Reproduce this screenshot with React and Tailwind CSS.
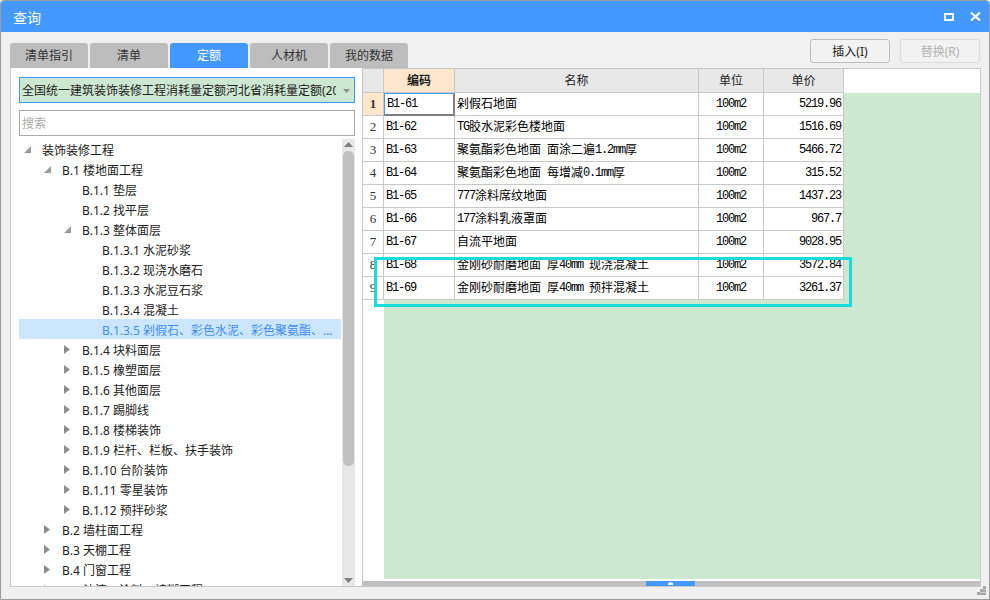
import React from "react";

const CJK = '"Noto Sans", "Noto Sans CJK SC", sans-serif';

const TABS = [
  { label: "清单指引" },
  { label: "清单" },
  { label: "定额", active: true },
  { label: "人材机" },
  { label: "我的数据" },
];

const TREE = [
  { level: 0, label: "装饰装修工程", arrow: "open" },
  { level: 1, label: "B.1 楼地面工程", arrow: "open" },
  { level: 2, label: "B.1.1 垫层" },
  { level: 2, label: "B.1.2 找平层" },
  { level: 2, label: "B.1.3 整体面层", arrow: "open" },
  { level: 3, label: "B.1.3.1 水泥砂浆" },
  { level: 3, label: "B.1.3.2 现浇水磨石" },
  { level: 3, label: "B.1.3.3 水泥豆石浆" },
  { level: 3, label: "B.1.3.4 混凝土" },
  { level: 3, label: "B.1.3.5 剁假石、彩色水泥、彩色聚氨酯、自流平地面", selected: true },
  { level: 2, label: "B.1.4 块料面层", arrow: "closed" },
  { level: 2, label: "B.1.5 橡塑面层", arrow: "closed" },
  { level: 2, label: "B.1.6 其他面层", arrow: "closed" },
  { level: 2, label: "B.1.7 踢脚线", arrow: "closed" },
  { level: 2, label: "B.1.8 楼梯装饰", arrow: "closed" },
  { level: 2, label: "B.1.9 栏杆、栏板、扶手装饰", arrow: "closed" },
  { level: 2, label: "B.1.10 台阶装饰", arrow: "closed" },
  { level: 2, label: "B.1.11 零星装饰", arrow: "closed" },
  { level: 2, label: "B.1.12 预拌砂浆", arrow: "closed" },
  { level: 1, label: "B.2 墙柱面工程", arrow: "closed" },
  { level: 1, label: "B.3 天棚工程", arrow: "closed" },
  { level: 1, label: "B.4 门窗工程", arrow: "closed" },
  { level: 1, label: "B.5 油漆、涂料、裱糊工程", arrow: "closed" },
];

const ROWS = [
  ["B1-61", "剁假石地面", "100m2", "5219.96"],
  ["B1-62", "TG胶水泥彩色楼地面", "100m2", "1516.69"],
  ["B1-63", "聚氨酯彩色地面 面涂二遍1.2mm厚", "100m2", "5466.72"],
  ["B1-64", "聚氨酯彩色地面 每增减0.1mm厚", "100m2", "315.52"],
  ["B1-65", "777涂料席纹地面", "100m2", "1437.23"],
  ["B1-66", "177涂料乳液罩面", "100m2", "967.7"],
  ["B1-67", "自流平地面", "100m2", "9028.95"],
  ["B1-68", "金刚砂耐磨地面 厚40mm 现浇混凝土", "100m2", "3572.84"],
  ["B1-69", "金刚砂耐磨地面 厚40mm 预拌混凝土", "100m2", "3261.37"],
];

// latin runs in the grid are half-width, like the old bitmap font
function Mixed({ text }) {
  return text.split(/([\x20-\x7e]+)/).map((part, i) =>
    /^[\x20-\x7e]+$/.test(part) ? (
      <span key={i} className="font-['Liberation_Mono'] tracking-[-1.2px] whitespace-pre">
        {part}
      </span>
    ) : (
      <span key={i}>{part}</span>
    )
  );
}

function TreeArrow({ type }) {
  if (type === "open") {
    return (
      <svg width="7" height="7" viewBox="0 0 7 7" className="block">
        <path d="M7 0V7H0Z" fill="#9a9a9a" />
      </svg>
    );
  }
  return (
    <svg width="6" height="9" viewBox="0 0 6 9" className="block">
      <path d="M0 0L6 4.500L0 9Z" fill="#8c8c8c" />
    </svg>
  );
}

function TreeRow({ item }) {
  const indent = ["pl-[5px]", "pl-[25px]", "pl-[45px]", "pl-[65px]"][item.level];
  return (
    <div
      className={`h-5 shrink-0 flex items-center text-xs ${indent} ${
        item.selected ? "bg-[#cce6ff] text-[#3f8ff0]" : "text-[#222]"
      }`}
    >
      <span className="w-[18px] shrink-0 flex items-center">{item.arrow && <TreeArrow type={item.arrow} />}</span>
      <span className="truncate pr-[4px] pt-[3px]">{item.label}</span>
    </div>
  );
}

function GridRow({ row, index }) {
  const first = index === 0;
  return (
    <div className="h-[23px] shrink-0 flex text-xs text-black">
      <div
        className={`w-[21px] shrink-0 flex items-center justify-center border-r border-b border-[#c8c8c8] text-[#333] font-['Liberation_Serif'] text-[13px] ${
          first ? "bg-[#fde6cc] font-bold" : "bg-white"
        }`}
      >
        {index + 1}
      </div>
      <div
        className={`w-[71px] shrink-0 flex items-center pl-[2px] bg-white ${
          first
            ? "border-l border-t border-[#4399ff] border-r-2 border-b-2 border-r-[#808080] border-b-[#808080]"
            : "border-r border-b border-[#c8c8c8]"
        }`}
      >
        <Mixed text={row[0]} />
      </div>
      <div className="w-[244px] shrink-0 flex items-center pl-[2px] bg-white border-r border-b border-[#c8c8c8] whitespace-nowrap">
        <Mixed text={row[1]} />
      </div>
      <div className="w-[65px] shrink-0 flex items-center justify-center bg-white border-r border-b border-[#c8c8c8]">
        <Mixed text={row[2]} />
      </div>
      <div className="w-[80px] shrink-0 flex items-center justify-end pr-[2px] bg-white border-r border-b border-[#c8c8c8]">
        <Mixed text={row[3]} />
      </div>
      <div className="flex-1 bg-[#cde8d0]" />
    </div>
  );
}

export default function App() {
  return (
    <div
      className="w-[990px] h-[600px] relative flex flex-col overflow-hidden bg-[#f0f0f0] border border-[#9b9b9b] rounded-t-[4px]"
      style={{ fontFamily: CJK }}
    >
      {/* Title bar */}
      <header className="h-[31px] shrink-0 bg-[#4399ff] flex items-center pl-3 pr-[8px] text-white">
        <span className="text-sm pt-[2px]">查询</span>
        <div className="ml-auto flex items-center gap-[16px]">
          <span className="block w-[10px] h-[8px] border-2 border-white" />
          <svg width="11" height="9" viewBox="0 0 11 9">
            <path d="M1 0.500L10 8.500M10 0.500L1 8.500" stroke="#fff" strokeWidth="2.200" />
          </svg>
        </div>
      </header>

      {/* Tabs and actions */}
      <div className="h-[36px] shrink-0 flex items-end pl-[9px] pr-[9px]">
        <div className="flex gap-[2px]">
          {TABS.map((tab) => (
            <div
              key={tab.label}
              className={`w-[78px] h-[25px] pt-px flex items-center justify-center text-xs rounded-t-[3px] ${
                tab.active ? "bg-[#4399ff] text-white" : "bg-[#bdbdbd] text-[#333]"
              }`}
            >
              {tab.label}
            </div>
          ))}
        </div>
        <div className="ml-auto self-start mt-[7px] flex gap-[10px]">
          <button className="w-[80px] h-[24px] pt-px border border-[#bdbdbd] rounded-[3px] text-xs text-[#222] bg-[#f2f2f2]">
            插入(I)
          </button>
          <button className="w-[80px] h-[24px] pt-px border border-[#dcdcdc] rounded-[3px] text-xs text-[#b4b4b4] bg-[#f2f2f2]">
            替换(R)
          </button>
        </div>
      </div>

      {/* Main panels */}
      <main className="h-[519px] shrink-0 mx-[9px] w-[971px] flex">
        {/* Left: library tree */}
        <section className="w-[352px] shrink-0 h-full bg-white border-l border-b border-[#c8c8c8] pt-[9px] pl-[8px] pr-[7px] flex flex-col overflow-hidden">
          <div className="h-[26px] shrink-0 pt-px bg-[#cde8d0] border border-[#4399ff] flex items-center pl-[2px] text-xs text-[#222]">
            <span className="w-[314px] shrink-0 overflow-hidden whitespace-nowrap">
              全国统一建筑装饰装修工程消耗量定额河北省消耗量定额(2013)
            </span>
            <svg width="7" height="4" viewBox="0 0 7 4" className="ml-[7px]">
              <path d="M0 0H7L3.500 4Z" fill="#8f8f8f" />
            </svg>
          </div>
          <div className="h-[26px] shrink-0 mt-[7px] pt-px bg-white border border-[#a9a9a9] flex items-center pl-[2px] text-xs text-[#aaaaaa]">
            搜索
          </div>
          <div className="flex-1 min-h-0 mt-[3px] flex overflow-hidden">
            <div className="w-[322px] shrink-0 flex flex-col overflow-hidden">
              {TREE.map((item) => (
                <TreeRow key={item.label} item={item} />
              ))}
            </div>
            <div className="ml-px w-[13px] shrink-0 bg-[#e8e8e8] flex flex-col items-center">
              <svg width="9" height="5" viewBox="0 0 9 5" className="mt-[3px] shrink-0">
                <path d="M0 5L4.500 0L9 5Z" fill="#7f7f7f" />
              </svg>
              <div className="w-[11px] h-[315px] mt-[4px] bg-[#c0c0c0] rounded-[5px]" />
              <svg width="9" height="5" viewBox="0 0 9 5" className="mt-auto mb-[3px] shrink-0">
                <path d="M0 0H9L4.500 5Z" fill="#7f7f7f" />
              </svg>
            </div>
          </div>
        </section>

        {/* Right: quota grid */}
        <section className="flex-1 h-full bg-white border border-[#c8c8c8] flex flex-col overflow-hidden">
          <div className="h-[24px] shrink-0 flex text-xs text-[#222]">
            <div className="w-[21px] shrink-0 bg-[#e8e8e8] border-r border-b border-[#c8c8c8]" />
            <div className="w-[71px] shrink-0 pt-px bg-[#fde6cc] border-r border-b border-[#c8c8c8] flex items-center justify-center font-bold">
              编码
            </div>
            <div className="w-[244px] shrink-0 pt-px bg-[#e8e8e8] border-r border-b border-[#c8c8c8] flex items-center justify-center">
              名称
            </div>
            <div className="w-[65px] shrink-0 pt-px bg-[#e8e8e8] border-r border-b border-[#c8c8c8] flex items-center justify-center">
              单位
            </div>
            <div className="w-[80px] shrink-0 pt-px bg-[#e8e8e8] border-r border-b border-[#c8c8c8] flex items-center justify-center">
              单价
            </div>
            <div className="flex-1 bg-white" />
          </div>
          {ROWS.map((row, i) => (
            <GridRow key={row[0]} row={row} index={i} />
          ))}
          <div className="flex-1 min-h-0 flex">
            <div className="w-[21px] shrink-0 bg-white" />
            <div className="flex-1 bg-[#cde8d0]" />
          </div>
          <div className="h-[2px] shrink-0 bg-white" />
          <div className="h-[5px] shrink-0 bg-[#bfbfbf] flex">
            <div className="ml-[283px] w-[49px] bg-[#4399ff] flex items-center justify-center">
              <svg width="5" height="3" viewBox="0 0 5 3">
                <path d="M1.500 0H3.500V1H5V3H0V1H1.500Z" fill="#fff" />
              </svg>
            </div>
          </div>
        </section>
      </main>

      {/* Highlight box over rows 8 and 9 */}
      <div className="absolute left-[373px] top-[256px] w-[478px] h-[50px] border-[3px] border-[#1adcdc]" />

      {/* Resize grip */}
      <svg width="9" height="9" viewBox="0 0 9 9" className="absolute right-[3px] bottom-[4px]">
        <path d="M6 0H9V3H6ZM3 3H6V6H3ZM6 3.500H9V6H6ZM0 6H3V9H0ZM3 6.500H6V9H3ZM6 6.500H9V9H6Z" fill="#a6a6a6" />
      </svg>
    </div>
  );
}
